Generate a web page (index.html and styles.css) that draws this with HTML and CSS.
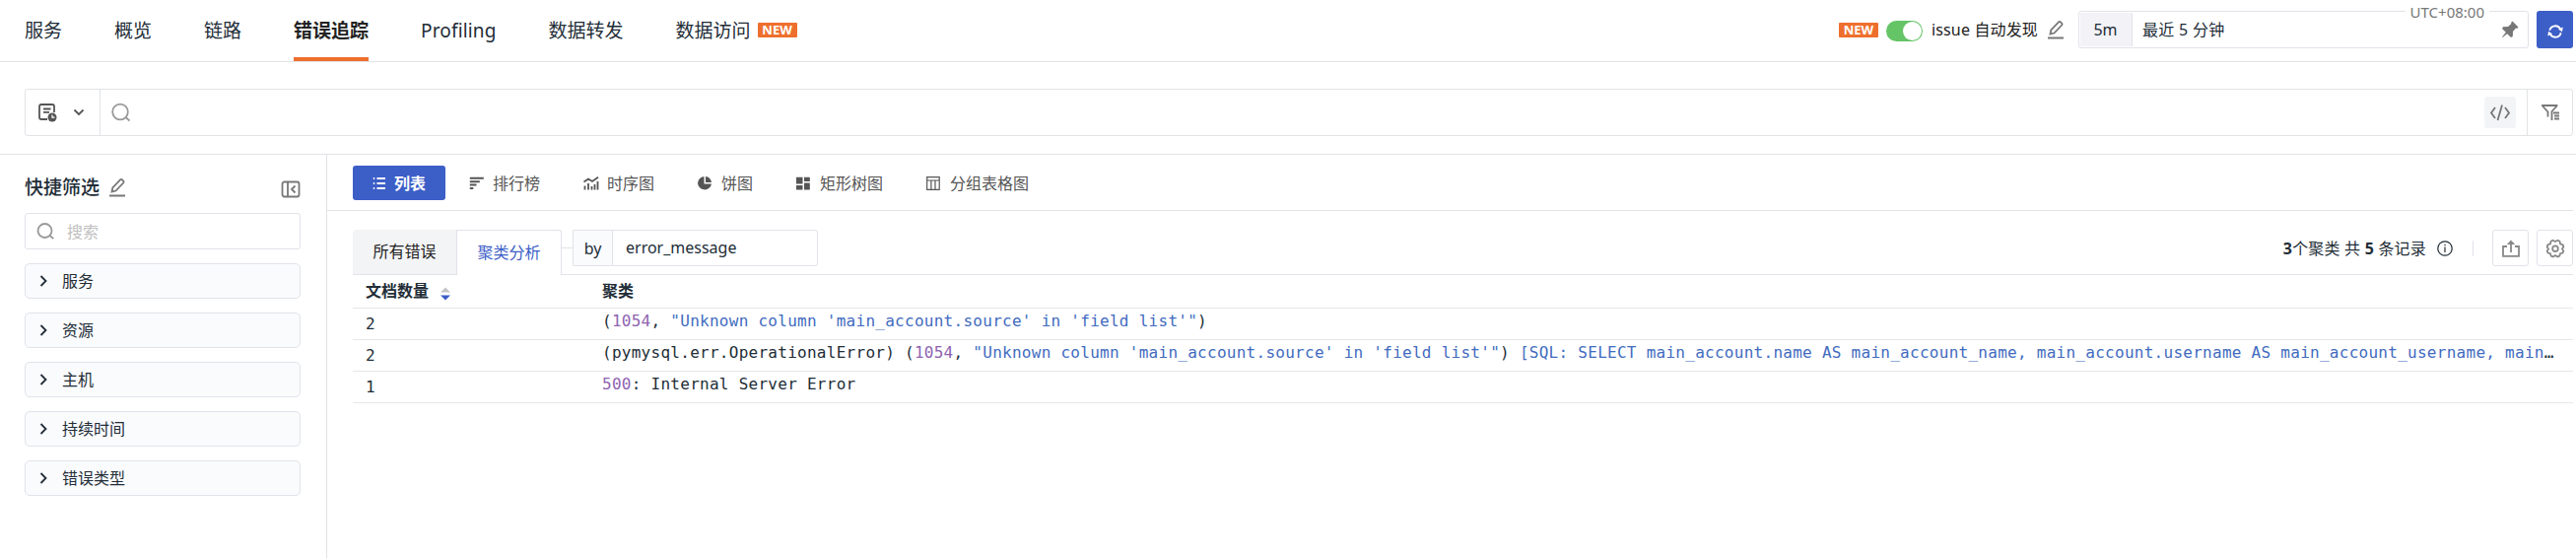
FILE: index.html
```html
<!DOCTYPE html>
<html lang="zh-CN">
<head>
  <meta charset="UTF-8" />
  <title>错误追踪</title>
  <meta name="viewport" content="width=device-width, initial-scale=1.0" />
  <link rel="stylesheet" href="styles.css">
</head>
<body>

  <header>
    <nav>
      <a>服务</a>
      <a>概览</a>
      <a>链路</a>
      <a class="active">错误追踪</a>
      <a class="latin">Profiling</a>
      <a>数据转发</a>
      <a>数据访问 <span class="new-tag">NEW</span></a>
    </nav>

    <div class="header-right">
      <span class="new-tag">NEW</span>
      <span class="switch"></span>
      <span class="issue-text">issue 自动发现</span>
      <svg class="edit-icon" width="18" height="20" viewBox="0 0 18 20"><path d="M1 18.500h16M3.500 14.500l.8-4L12 2.300q1-.8 2 0l1.200 1.200q.8 1 0 2L7.500 13.500z" /></svg>
      <div class="time-box">
        <span class="time-short">5m</span>
        <span class="time-text">最近 5 分钟</span>
        <span class="timezone">UTC+08:00</span>
        <svg class="pin" width="18" height="18" viewBox="0 0 18 18"><path d="M11.500 0.500L17.500 6.500L16 8L15 7.600L12 11L11.800 16L10 17L6.200 13.200L1.500 17L1 16.500L4.800 11.800L1 8L2 6.200L7 6L10.400 3L10 2Z" /></svg>
      </div>
      <button class="refresh-btn">
        <svg width="16" height="16" viewBox="0 0 16 16"><path d="M2.300 6.800A5.800 5.800 0 0 1 13.200 5.600M13.700 9.200A5.800 5.800 0 0 1 2.800 10.400" /><path class="solid" d="M15.700 3.500l-.7 4.800-4-2.600zM.3 12.500l.7-4.800 4 2.600z" /></svg>
      </button>
    </div>
  </header>

  <div class="search-row">
    <div class="search-bar">
      <div class="search-mode">
        <svg width="20" height="20" viewBox="0 0 20 20"><path d="M10 17H4Q2 17 2 15V4Q2 2 4 2H15Q17 2 17 4V10M6 6.500h7.500M6 9.800h6" /><circle class="solid" cx="15" cy="15" r="4.500" /><path class="clock" d="M15 12.500V15.200H17.500" /></svg>
        <svg width="12" height="12" viewBox="0 0 12 12"><path d="M1.500 3.500l4.500 4.500 4.500-4.500" /></svg>
      </div>
      <div class="search-input">
        <svg width="22" height="20" viewBox="0 0 22 20"><circle cx="10" cy="9.500" r="7.800" /><path d="M15.500 15L19.500 18.500" /></svg>
        <span class="code-btn">
          <svg width="22" height="18" viewBox="0 0 22 18"><path d="M6 4L2 9.500L6 15M16 4l4 5.500L16 15M13 1.500L8.500 17" /></svg>
        </span>
      </div>
      <div class="filter-btn">
        <svg width="20" height="18" viewBox="0 0 20 18"><path d="M7.500 13.500V8.500L2 2.500V2H16.500V2.500L11.500 8V17M13 9.500h6M14 12.500h5M14 15.500h5" /></svg>
      </div>
    </div>
  </div>

  <div class="page">
    <aside>
      <div class="filter-title">
        <h3>快捷筛选</h3>
        <svg class="edit-icon" width="18" height="20" viewBox="0 0 18 20"><path d="M1 18.500h16M3.500 14.500l.8-4L12 2.300q1-.8 2 0l1.200 1.200q.8 1 0 2L7.500 13.500z" /></svg>
        <svg class="collapse" width="20" height="18" viewBox="0 0 20 18"><rect x="1.500" y="1.500" width="17" height="15" rx="2" /><path d="M7 1.500v15M14.500 5.500L11 9l3.500 3.500" /></svg>
      </div>
      <div class="filter-search">
        <svg width="20" height="18" viewBox="0 0 20 18"><circle cx="8.500" cy="8" r="7" /><path d="M13.500 13l3.800 3" /></svg>
        <span>搜索</span>
      </div>
      <div class="filter-item"><svg width="8" height="12" viewBox="0 0 8 12"><path d="M1.500 1L6.500 6l-5 5" /></svg>服务</div>
      <div class="filter-item"><svg width="8" height="12" viewBox="0 0 8 12"><path d="M1.500 1L6.500 6l-5 5" /></svg>资源</div>
      <div class="filter-item"><svg width="8" height="12" viewBox="0 0 8 12"><path d="M1.500 1L6.500 6l-5 5" /></svg>主机</div>
      <div class="filter-item"><svg width="8" height="12" viewBox="0 0 8 12"><path d="M1.500 1L6.500 6l-5 5" /></svg>持续时间</div>
      <div class="filter-item"><svg width="8" height="12" viewBox="0 0 8 12"><path d="M1.500 1L6.500 6l-5 5" /></svg>错误类型</div>
    </aside>

    <main>
      <div class="view-tabs">
        <span class="view active"><svg width="16" height="14" viewBox="0 0 16 14"><path d="M4.500 2h8.500M4.500 7h8.500M4.500 12h8.500M.8 2h1.400M.8 7h1.400M.8 12h1.400" /></svg>列表</span>
        <span class="view"><svg width="16" height="14" viewBox="0 0 16 14"><path d="M.8 1.800h14M.8 5.200h10M.8 8.600h6.700M.8 12h3.500" stroke-width="2" /></svg>排行榜</span>
        <span class="view"><svg width="16" height="14" viewBox="0 0 16 14"><path d="M.5 5.500L5 2.500L9 5L15 .8M1.500 13.500V9.500M5 13.500V7M8.500 13.500V10M11.500 13.500V8M14.500 13.500V5" /></svg>时序图</span>
        <span class="view"><svg width="16" height="14" viewBox="0 0 16 14"><path class="solid" d="M6.500 0V7.500H14A7 6.700 0 1 1 6.500 0zM8 0A6.500 6.200 0 0 1 14 6H8z" /></svg>饼图</span>
        <span class="view"><svg width="16" height="14" viewBox="0 0 16 14"><path class="solid" d="M0 .8h6.500v6.700H0zM0 9h6.500v4.500H0zM8 .8h5.800v4.200H8zM8 6.500h5.800v7H8z" /></svg>矩形树图</span>
        <span class="view"><svg width="16" height="14" viewBox="0 0 16 14"><path d="M.7 .7h12.500v12.600H.7zM.7 4h12.500M4.900 4v9.300M9 4v9.300" stroke-width="1.200" /></svg>分组表格图</span>
      </div>

      <div class="result">
        <div class="result-bar">
          <span class="tab">所有错误</span>
          <span class="tab active">聚类分析</span>
          <span class="joint"></span>
          <div class="group-by">
            <span class="by">by</span>
            <span class="by-field">error_message</span>
          </div>
          <div class="bar-right">
            <span class="total"><b>3</b>个聚类 共 <b>5</b> 条记录</span>
            <svg class="info" width="16" height="16" viewBox="0 0 16 16"><circle cx="8" cy="8" r="7.200" /><path d="M8 6.500V12M8 3.700v1.500" /></svg>
            <i class="sep"></i>
            <span class="square-btn"><svg width="20" height="18" viewBox="0 0 20 18"><path d="M6 7H2v9.800h16V7h-4M10 13V3" /><path class="solid" d="M5.800 5L10 .5L14.200 5z" /></svg></span>
            <span class="square-btn"><svg width="20" height="20" viewBox="0 0 20 20"><path d="M7.500 1.800L10 3l2.500-1.200L14.500 2.800L15 5.300L17.800 6.500L18.300 8.500L17 10.500L18.300 12.500L17.500 14.500L15 15.200L14.300 17.700L12.300 18.500L10 17L7.700 18.500L5.700 17.700L5 15.200L2.500 14.500L1.700 12.500L3 10.500L1.700 8.500L2.200 6.500L5 5.300L5.500 2.800Z" /><circle cx="10" cy="10.200" r="2.800" /></svg></span>
          </div>
        </div>

        <table>
          <tr>
            <th class="count">文档数量 <svg class="sort" width="12" height="14" viewBox="0 0 12 14"><path fill="#c4c4c4" d="M1 5.500L6 .5l5 5z" /><path fill="#3c5ec7" d="M1 8.500h10L6 13.500z" /></svg></th>
            <th>聚类</th>
          </tr>
          <tr>
            <td class="count">2</td>
            <td><div class="message">(<span class="num">1054</span>, <span class="str">"Unknown column 'main_account.source' in 'field list'"</span>)</div></td>
          </tr>
          <tr>
            <td class="count">2</td>
            <td><div class="message">(pymysql.err.OperationalError) (<span class="num">1054</span>, <span class="str">"Unknown column 'main_account.source' in 'field list'"</span>) <span class="str">[SQL: SELECT main_account.name AS main_account_name, main_account.username AS main_account_username, main</span>…</div></td>
          </tr>
          <tr>
            <td class="count">1</td>
            <td><div class="message"><span class="num">500</span>: Internal Server Error</div></td>
          </tr>
        </table>
      </div>
    </main>
  </div>

</body>
</html>
```
FILE: styles.css
```css
* { box-sizing: border-box; }

body {
  font-family: "Noto Sans", "Noto Sans CJK SC", sans-serif;
  font-size: 16px;
  line-height: 24px;
  background: #fff;
  color: #222d37;
  margin: 0;
  height: 566px;
  overflow: hidden;
  display: flex;
  flex-direction: column;
}

svg {
  display: block;
  flex: none;
  fill: none;
  stroke: currentColor;
  stroke-width: 1.8;
}

svg .solid {
  fill: currentColor;
  stroke: none;
}

header {
  display: flex;
  justify-content: space-between;
  height: 63px;
  padding: 0 3px 0 25px;
  border-bottom: 1px solid #e1e3e6;
}

nav {
  display: flex;
  gap: 53px;
  font-size: 19px;
}

nav a {
  display: flex;
  align-items: center;
  height: 62px;
  border-bottom: 4px solid transparent;
  padding-top: 3px;
}

nav a.active {
  color: #222;
  font-weight: bold;
  border-bottom-color: #ee6f2d;
}

nav a.latin { letter-spacing: 0.15px; }

.new-tag {
  width: 40px;
  height: 15px;
  line-height: 15px;
  border-radius: 1px;
  background: #ee6f2d;
  color: #fff;
  font-size: 13px;
  font-weight: bold;
  text-align: center;
}

nav .new-tag { margin-left: 7px; }

.header-right {
  display: flex;
  align-items: center;
  height: 60px;
}

.switch {
  width: 37px;
  height: 21px;
  margin: 2px 9px 0 8px;
  padding: 1px;
  border-radius: 11px;
  background: #64c466;
}

.switch::after {
  content: "";
  display: block;
  width: 19px;
  height: 19px;
  margin-left: auto;
  border-radius: 50%;
  background: #fff;
}

.issue-text {
  color: #222;
  letter-spacing: 0.15px;
}

.edit-icon {
  margin-left: 9px;
  color: #777;
}

.time-box {
  position: relative;
  display: flex;
  align-items: center;
  width: 457px;
  height: 38px;
  margin-left: 14px;
  padding: 1px;
  border: 1px solid #e1e3e9;
  border-radius: 3px;
}

.time-short {
  width: 53px;
  height: 34px;
  line-height: 35px;
  padding-right: 1px;
  text-align: center;
  background: #f2f2f7;
  border-right: 1px solid #e1e3e9;
}

.time-text {
  margin-left: 10px;
  letter-spacing: 0.3px;
}

.timezone {
  position: absolute;
  top: -11px;
  right: 39px;
  padding: 0 5px;
  background: #fff;
  color: #777;
  font-size: 15px;
  line-height: 22px;
}

.pin {
  margin-left: auto;
  margin-right: 8px;
  fill: #777;
  stroke: none;
}

.refresh-btn {
  display: flex;
  align-items: center;
  justify-content: center;
  width: 37px;
  height: 38px;
  margin-left: 8px;
  padding: 3px 0 0;
  border: none;
  border-radius: 3px;
  background: #3c5ec7;
  color: #fff;
}

.search-row {
  height: 94px;
  padding: 27px 3px 0 25px;
  border-bottom: 1px solid #e1e3e6;
}

.search-bar {
  display: flex;
  height: 48px;
  border: 1px solid #e1e3e6;
  border-radius: 3px;
}

.search-mode {
  display: flex;
  align-items: center;
  gap: 16px;
  width: 76px;
  padding-left: 12px;
  border-right: 1px solid #e1e3e6;
  color: #555;
}

.search-mode svg .clock {
  stroke: #fff;
  stroke-width: 1.2;
}

.search-input {
  flex: 1;
  display: flex;
  align-items: center;
  justify-content: space-between;
  padding: 0 11px 0 10px;
  color: #999;
}

.code-btn {
  display: flex;
  align-items: center;
  justify-content: center;
  width: 32px;
  height: 32px;
  border-radius: 3px;
  background: #f3f4f6;
  color: #777;
}

.filter-btn {
  display: flex;
  align-items: center;
  justify-content: center;
  width: 46px;
  border-left: 1px solid #e1e3e6;
  color: #777;
}

.page {
  flex: 1;
  display: flex;
  min-height: 0;
}

aside {
  width: 332px;
  flex: none;
  padding: 19px 26px 0 25px;
  border-right: 1px solid #e1e3e6;
}

.filter-title {
  display: flex;
  align-items: center;
  height: 28px;
  margin-bottom: 12px;
}

h3 {
  margin: 0;
  font-size: 19px;
  font-weight: 500;
}

.collapse {
  margin-left: auto;
  margin-top: 4px;
  color: #777;
}

.filter-search {
  display: flex;
  align-items: center;
  gap: 11px;
  height: 37px;
  margin-bottom: 14px;
  padding-left: 11px;
  border: 1px solid #e1e3e9;
  border-radius: 3px;
  color: #999;
}

.filter-search span { color: #bfbfbf; }

.filter-item {
  display: flex;
  align-items: center;
  gap: 15px;
  height: 36px;
  margin-bottom: 14px;
  padding-left: 14px;
  border: 1px solid #e1e3e9;
  border-radius: 5px;
  background: #fafbfd;
}

main {
  flex: 1;
  min-width: 0;
  padding-right: 3px;
}

.view-tabs {
  display: flex;
  gap: 4px;
  height: 57px;
  padding: 11px 0 0 26px;
  border-bottom: 1px solid #e1e3e6;
}

.view {
  display: flex;
  align-items: center;
  gap: 8px;
  height: 35px;
  padding: 0 20px;
  color: #555;
}

.view.active {
  gap: 6px;
  border-radius: 3px;
  background: #3c5ec7;
  color: #fff;
  font-weight: bold;
}

.result { padding: 19px 0 0 26px; }

.result-bar {
  display: flex;
  height: 46px;
  border-bottom: 1px solid #e1e3e9;
}

.tab {
  width: 105px;
  height: 45px;
  line-height: 45px;
  text-align: center;
  background: #f3f4f6;
  color: #222;
  border-radius: 3px 0 0 0;
}

.tab.active {
  width: 107px;
  height: 46px;
  border: 1px solid #e1e3e9;
  border-bottom: none;
  border-radius: 0 3px 0 0;
  background: #fff;
  color: #3c5ec7;
}

.joint {
  width: 11px;
  height: 1px;
  margin-top: 18px;
  background: #e1e3e9;
}

.group-by {
  display: flex;
  width: 249px;
  height: 37px;
  border: 1px solid #e1e3e9;
  border-radius: 0 3px 3px 0;
}

.by {
  width: 40px;
  line-height: 37px;
  text-align: center;
  background: #fafbfd;
  border-right: 1px solid #e1e3e9;
}

.by-field {
  padding-left: 13px;
  line-height: 34px;
}

.bar-right {
  display: flex;
  align-items: center;
  height: 37px;
  margin-left: auto;
}

.total { letter-spacing: 0.2px; }

.info {
  margin-left: 11px;
  stroke-width: 1.2;
}

.sep {
  width: 1px;
  height: 16px;
  margin: 0 19px 0 20px;
  background: #e1e3e9;
}

.square-btn {
  display: flex;
  align-items: center;
  justify-content: center;
  width: 37px;
  height: 37px;
  border: 1px solid #e1e3e9;
  border-radius: 3px;
  color: #888;
}

.square-btn + .square-btn { margin-left: 8px; }

table {
  width: 100%;
  table-layout: fixed;
  border-collapse: separate;
  border-spacing: 0;
}

th, td {
  height: 32px;
  padding: 0 13px;
  border-bottom: 1px solid #e6e7ea;
  text-align: left;
  vertical-align: top;
}

th {
  height: 34px;
  line-height: 32px;
}

.count { width: 240px; }

td {
  font-family: "DejaVu Sans Mono", monospace;
  line-height: 31px;
}

.sort {
  display: inline-block;
  stroke: none;
  margin-left: 7px;
  vertical-align: -4px;
}

.message {
  height: 31px;
  line-height: 26px;
  letter-spacing: 0.27px;
  white-space: nowrap;
  overflow: hidden;
  text-overflow: ellipsis;
}

.num { color: #8e63b0; }
.str { color: #426bc0; }
```
